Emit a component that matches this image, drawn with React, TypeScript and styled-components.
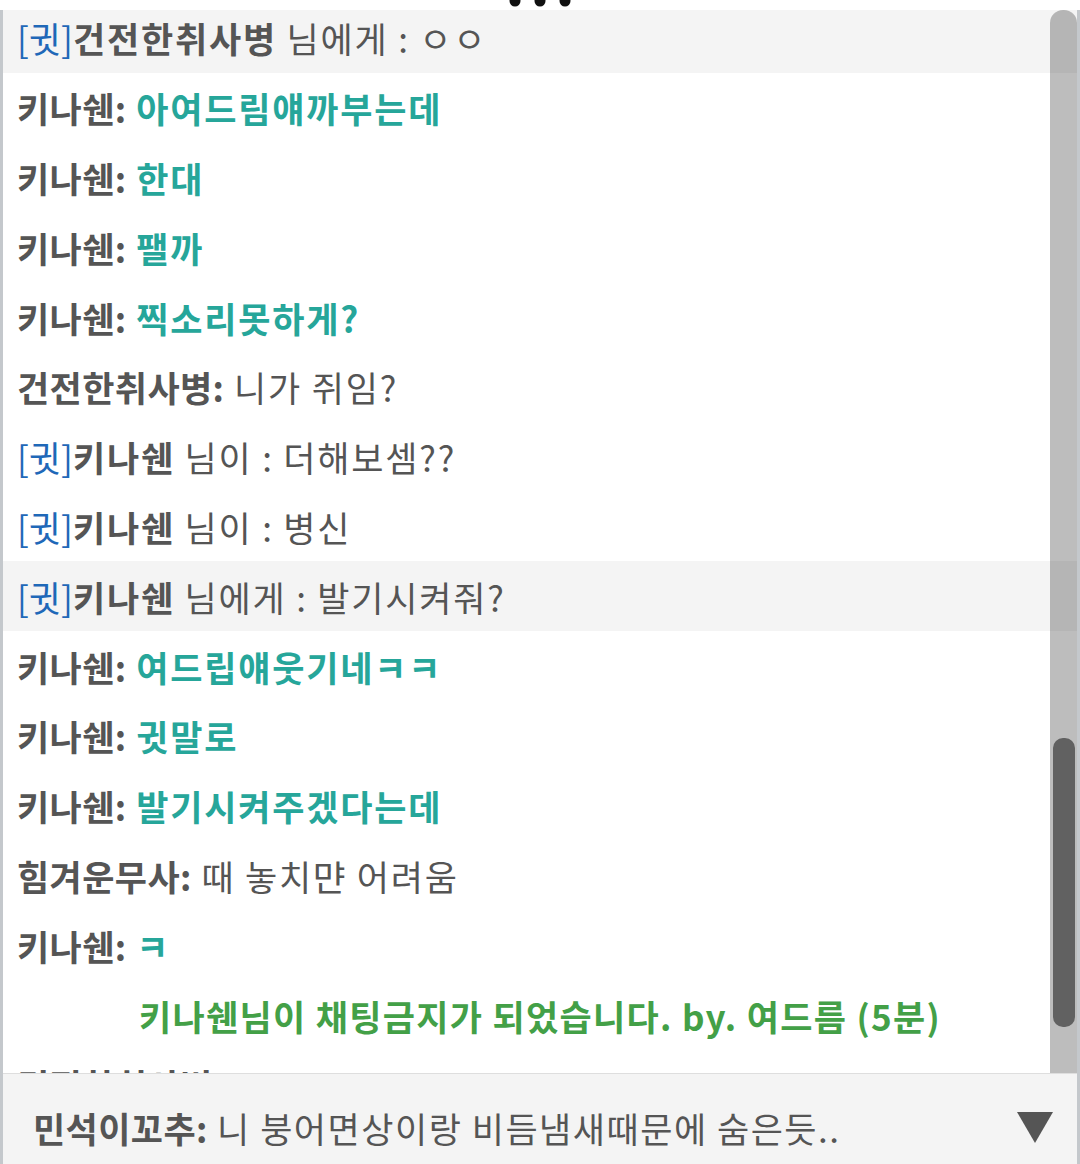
import React from 'react'
import styled, { createGlobalStyle } from 'styled-components'

const GlobalStyle = createGlobalStyle`
  html, body {
    margin: 0;
    padding: 0;
    background: #ffffff;
  }
  body {
    font-family: "Noto Sans CJK KR", "Noto Sans", sans-serif;
  }
`

type Line =
  | { kind: 'chat'; name: string; text: string; tone: 'teal' | 'plain' }
  | { kind: 'whisper'; name: string; verb: string; text: string; highlight?: boolean }
  | { kind: 'system'; text: string }

const lines: Line[] = [
  { kind: 'whisper', name: '건전한취사병', verb: '님에게', text: 'ㅇㅇ', highlight: true },
  { kind: 'chat', name: '키나쉔', text: '아여드림얘까부는데', tone: 'teal' },
  { kind: 'chat', name: '키나쉔', text: '한대', tone: 'teal' },
  { kind: 'chat', name: '키나쉔', text: '팰까', tone: 'teal' },
  { kind: 'chat', name: '키나쉔', text: '찍소리못하게?', tone: 'teal' },
  { kind: 'chat', name: '건전한취사병', text: '니가 쥐임?', tone: 'plain' },
  { kind: 'whisper', name: '키나쉔', verb: '님이', text: '더해보셈??' },
  { kind: 'whisper', name: '키나쉔', verb: '님이', text: '병신' },
  { kind: 'whisper', name: '키나쉔', verb: '님에게', text: '발기시켜줘?', highlight: true },
  { kind: 'chat', name: '키나쉔', text: '여드립얘웃기네ㅋㅋ', tone: 'teal' },
  { kind: 'chat', name: '키나쉔', text: '귓말로', tone: 'teal' },
  { kind: 'chat', name: '키나쉔', text: '발기시켜주겠다는데', tone: 'teal' },
  { kind: 'chat', name: '힘겨운무사', text: '때 놓치먄 어려움', tone: 'plain' },
  { kind: 'chat', name: '키나쉔', text: 'ㅋ', tone: 'teal' },
  { kind: 'system', text: '키나쉔님이 채팅금지가 되었습니다. by. 여드름 (5분)' },
  { kind: 'chat', name: '건전한취사병', text: 'ㅋㅋㅋㅋㅋㅋㅋㅋㅋㅋㅋㅋㅋㅋㅋㅋㅋㅋㅋㅋㅋㅋ', tone: 'plain' },
]

const Frame = styled.div`
  position: relative;
  width: 1080px;
  height: 1164px;
  background: #ffffff;
  overflow: hidden;
  display: flex;
  flex-direction: column;
`

const TopStrip = styled.div`
  height: 10px;
  display: flex;
  justify-content: center;
  align-items: flex-start;
  background: #ffffff;
`

const Panel = styled.div`
  flex: 1;
  display: flex;
  flex-direction: column;
  border-left: 3px solid #c4c8cc;
  border-right: 3px solid #c4c8cc;
  min-height: 0;
`

const ChatViewport = styled.div`
  position: relative;
  height: 1063px;
  overflow: hidden;
`

const ChatList = styled.div`
  margin-top: -7px;
  display: flex;
  flex-direction: column;
`

const Row = styled.div<{ $highlight?: boolean; $center?: boolean }>`
  height: 69.8px;
  flex-shrink: 0;
  display: flex;
  align-items: center;
  justify-content: ${p => (p.$center ? 'center' : 'flex-start')};
  padding-left: ${p => (p.$center ? '0' : '14px')};
  background: ${p => (p.$highlight ? '#f4f4f4' : 'transparent')};
  font-size: 35px;
  white-space: pre;
  color: #555555;
  letter-spacing: 1.8px;
`

const Name = styled.span<{ $tight?: boolean }>`
  font-weight: 700;
  color: #555555;
  letter-spacing: ${p => (p.$tight ? '0.4px' : '1.8px')};
`

const Tag = styled.span`
  color: #1f68b8;
  font-weight: 400;
  letter-spacing: 0;
`

const Message = styled.span<{ $tone: 'teal' | 'plain' }>`
  font-weight: ${p => (p.$tone === 'teal' ? 700 : 400)};
  color: ${p => (p.$tone === 'teal' ? '#26a69a' : '#555555')};
`

const Plain = styled.span`
  font-weight: 400;
  color: #555555;
`

const SystemText = styled.span`
  font-weight: 700;
  color: #43a047;
  letter-spacing: 1.3px;
`

const ScrollTrack = styled.div`
  position: absolute;
  top: 0;
  right: 0;
  bottom: 0;
  width: 27px;
  border-radius: 13px 13px 0 0;
  background: rgba(0, 0, 0, 0.26);
`

const ScrollThumb = styled.div`
  position: absolute;
  left: 3px;
  right: 2px;
  top: 728px;
  height: 289px;
  border-radius: 10px;
  background: #616161;
`

const BottomBar = styled.div`
  flex: 1;
  display: flex;
  align-items: center;
  justify-content: space-between;
  padding: 16px 24px 0 30px;
  background: #f4f4f4;
  border-top: 1px solid #dedede;
  font-size: 35px;
  white-space: nowrap;
  letter-spacing: 1.5px;
`

const BarText = styled.div`
  color: #555555;
`

function Dots() {
  return (
    <svg width="64" height="10" viewBox="0 0 64 10">
      <circle cx="7" cy="1" r="5.5" fill="#111" />
      <circle cx="32" cy="1" r="5.5" fill="#111" />
      <circle cx="57" cy="1" r="5.5" fill="#111" />
    </svg>
  )
}

function Caret() {
  return (
    <svg width="36" height="31" viewBox="0 0 36 31">
      <polygon points="0,0 36,0 18,31" fill="#555555" />
    </svg>
  )
}

function ChatLine({ line }: { line: Line }) {
  if (line.kind === 'system') {
    return (
      <Row $center>
        <SystemText>{line.text}</SystemText>
      </Row>
    )
  }
  if (line.kind === 'whisper') {
    return (
      <Row $highlight={line.highlight}>
        <Tag>[귓]</Tag>
        <Name>{line.name}</Name>
        <Plain> {line.verb} : {line.text}</Plain>
      </Row>
    )
  }
  return (
    <Row>
      <Name $tight>{line.name}:</Name>
      <Message $tone={line.tone}> {line.text}</Message>
    </Row>
  )
}

export default function App() {
  return (
    <>
      <GlobalStyle />
      <Frame>
        <TopStrip>
          <Dots />
        </TopStrip>
        <Panel>
          <ChatViewport>
            <ChatList>
              {lines.map((line, i) => (
                <ChatLine key={i} line={line} />
              ))}
            </ChatList>
            <ScrollTrack>
              <ScrollThumb />
            </ScrollTrack>
          </ChatViewport>
          <BottomBar>
            <BarText>
              <Name $tight>민석이꼬추:</Name>
              <Plain>&nbsp;니 붕어면상이랑 비듬냄새때문에 숨은듯..</Plain>
            </BarText>
            <Caret />
          </BottomBar>
        </Panel>
      </Frame>
    </>
  )
}
